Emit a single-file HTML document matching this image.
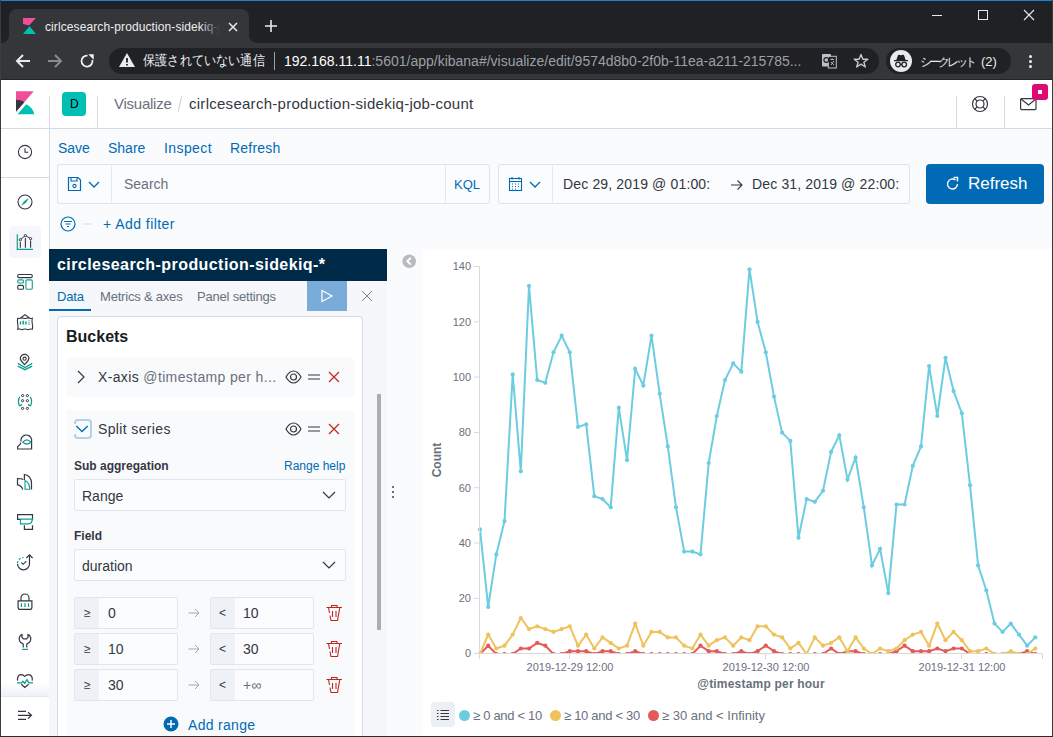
<!DOCTYPE html>
<html><head><meta charset="utf-8">
<style>
*{box-sizing:border-box;margin:0;padding:0}
html,body{width:1053px;height:737px;overflow:hidden;background:#fafbfd;font-family:"Liberation Sans",sans-serif}
.a{position:absolute}
.t{position:absolute;white-space:nowrap;line-height:1}
svg{position:absolute;overflow:visible}
</style></head><body>
<!-- CHROME -->
<div class="a" style="left:0;top:0;width:1053px;height:43px;background:#202124"></div>
<div class="a" style="left:0;top:0;width:1053px;height:1px;background:#1883d7"></div>
<div class="a" style="left:9px;top:9px;width:240px;height:34px;background:#35363a;border-radius:8px 8px 0 0"></div>
<div class="a" style="left:0;top:43px;width:1053px;height:36px;background:#35363a"></div>
<div class="a" style="left:1px;top:35px;width:8px;height:8px;background:radial-gradient(circle at 0 0,#202124 7.5px,#35363a 8.5px)"></div>
<div class="a" style="left:249px;top:35px;width:8px;height:8px;background:radial-gradient(circle at 100% 0,#202124 7.5px,#35363a 8.5px)"></div>
<!-- favicon -->
<svg style="left:23px;top:18px" width="13" height="16" viewBox="0 0 13 16"><path d="M0 0H13L6 7.5 0 6Z" fill="#f04e98"/><path d="M0 6.5 6 8 0 15Z" fill="#343741"/><path d="M6.6 8.3 13 16H0Z" fill="#00bfb3"/></svg>
<div class="t" style="left:45px;top:21px;font-size:12px;color:#eceef1;letter-spacing:0.1px">cirlcesearch-production-sidekiq-j</div>
<div class="a" style="left:200px;top:14px;width:22px;height:24px;background:linear-gradient(90deg,rgba(53,54,58,0),#35363a 90%)"></div>
<svg style="left:228px;top:22px" width="10" height="10"><path d="M1 1L9 9M9 1L1 9" stroke="#e8eaed" stroke-width="1.5"/></svg>
<svg style="left:265px;top:20px" width="12" height="12"><path d="M6 0V12M0 6H12" stroke="#e8eaed" stroke-width="1.6"/></svg>
<!-- window controls -->
<div class="a" style="left:932px;top:15px;width:10px;height:1px;background:#e8eaed"></div>
<div class="a" style="left:978px;top:10px;width:10px;height:10px;border:1px solid #e8eaed"></div>
<svg style="left:1024px;top:10px" width="10" height="10"><path d="M0 0L10 10M10 0L0 10" stroke="#e8eaed" stroke-width="1.1"/></svg>
<!-- nav buttons -->
<svg style="left:15px;top:53px" width="16" height="16"><path d="M15 8H2M8 2L2 8L8 14" stroke="#e8eaed" stroke-width="2" fill="none"/></svg>
<svg style="left:47px;top:53px" width="16" height="16"><path d="M1 8H14M8 2L14 8L8 14" stroke="#8a8b8e" stroke-width="2" fill="none"/></svg>
<svg style="left:79px;top:53px" width="16" height="16"><path d="M8.5 2.6A5.5 5.5 0 1 0 13.4 7" stroke="#f1f3f4" stroke-width="1.8" fill="none"/><path d="M9.3 1.3H14.7V6.7Z" fill="#f1f3f4"/></svg>
<!-- omnibox -->
<div class="a" style="left:109px;top:48px;width:770px;height:26px;background:#202124;border-radius:13px"></div>
<svg style="left:119px;top:53px" width="16" height="15"><path d="M8 0L16 14H0Z" fill="#e8eaed"/><path d="M8 5V9.5M8 11V12.5" stroke="#202124" stroke-width="1.8"/></svg>
<div class="t" style="left:143px;top:53px;font-size:14px;color:#e8eaed;transform:scaleX(0.87);transform-origin:0 0">保護されていない通信</div>
<div class="a" style="left:274px;top:52px;width:1px;height:18px;background:#9aa0a6"></div>
<div class="t" style="left:284px;top:54px;font-size:14px;color:#fff">192.168.11.11<span style="color:#9aa0a6">:5601/app/kibana#/visualize/edit/9574d8b0-2f0b-11ea-a211-215785...</span></div>
<svg style="left:820px;top:53px" width="18" height="16"><rect x="2" y="1" width="9" height="12.5" rx="1" fill="#bdc1c6"/><rect x="8.3" y="3.3" width="8" height="11.7" fill="#202124" stroke="#bdc1c6" stroke-width="1"/><circle cx="6.3" cy="7" r="2.4" fill="none" stroke="#202124" stroke-width="1.2"/><path d="M10.5 6.5H14M12 5.5V7M11 9L14 12M14 8L11 12" stroke="#bdc1c6" stroke-width="0.9"/></svg>
<svg style="left:853px;top:53px" width="16" height="16"><path d="M8 1.6L9.9 6.2H14.8L10.9 9.2L12.3 14L8 11.2L3.7 14L5.1 9.2L1.2 6.2H6.1Z" fill="none" stroke="#c4c6c9" stroke-width="1.4" stroke-linejoin="round"/></svg>
<!-- incognito -->
<div class="a" style="left:886px;top:48px;width:125px;height:26px;background:#202124;border-radius:13px"></div>
<div class="a" style="left:890px;top:50px;width:22px;height:22px;background:#e8eaed;border-radius:50%"></div>
<svg style="left:892px;top:53px" width="18" height="16"><path d="M4.3 7H13.7L12 2.2Q11.7 1.5 11 1.7L9 2.2L7 1.7Q6.3 1.5 6 2.2Z" fill="#202124"/><path d="M2 7.6H16" stroke="#202124" stroke-width="1.2"/><circle cx="6" cy="11.5" r="2.3" fill="none" stroke="#202124" stroke-width="1.3"/><circle cx="12.2" cy="11.5" r="2.3" fill="none" stroke="#202124" stroke-width="1.3"/><path d="M8.2 11.3H10" stroke="#202124" stroke-width="1.2"/></svg>
<div class="t" style="left:920px;top:55px;font-size:12px;color:#e8eaed"><span style="letter-spacing:-3px">シークレット</span><span style="margin-left:7px;font-size:13px">(2)</span></div>
<div class="a" style="left:1029px;top:55px;width:3px;height:3px;background:#f1f3f4;border-radius:50%"></div>
<div class="a" style="left:1029px;top:60px;width:3px;height:3px;background:#f1f3f4;border-radius:50%"></div>
<div class="a" style="left:1029px;top:65px;width:3px;height:3px;background:#f1f3f4;border-radius:50%"></div>

<!-- KIBANA HEADER -->
<div class="a" style="left:1px;top:79px;width:1051px;height:1px;background:#232427"></div>
<div class="a" style="left:1px;top:80px;width:1051px;height:49px;background:#fff;border-bottom:1px solid #d3dae6"></div>
<svg style="left:16px;top:91px" width="18.5" height="23.5" viewBox="4 0 26 32.1"><path fill="#F04E98" d="M4 0v28.789L28.935.017z"/><path fill="#343741" d="M4 12v16.789l11.906-13.738A24.721 24.721 0 004 12"/><path fill="#00BFB3" d="M18.479 18.023l-11.2 12.92-1.011 1.12h23.564c-1.258-5.8-5.004-10.72-11.353-14.04"/></svg>
<div class="a" style="left:49px;top:96px;width:1px;height:33px;background:#d3dae6"></div>
<div class="a" style="left:62px;top:92px;width:24px;height:24px;background:#00bfb3;border-radius:4px"></div>
<div class="t" style="left:70px;top:98px;font-size:12px;color:#000">D</div>
<div class="a" style="left:97px;top:96px;width:1px;height:33px;background:#d3dae6"></div>
<div class="t" style="left:114px;top:96px;font-size:15px;color:#69707d;letter-spacing:-0.25px">Visualize</div>
<svg style="left:176px;top:95px" width="8" height="18"><path d="M5.6 1.5L2.2 16.5" stroke="#c8ccd3" stroke-width="1"/></svg>
<div class="t" style="left:189px;top:96px;font-size:15px;color:#343741;letter-spacing:0.27px">cirlcesearch-production-sidekiq-job-count</div>
<div class="a" style="left:956px;top:96px;width:1px;height:33px;background:#d3dae6"></div>
<div class="a" style="left:1004px;top:96px;width:1px;height:33px;background:#d3dae6"></div>
<svg style="left:971px;top:95px" width="18" height="18"><circle cx="9" cy="9" r="7.5" fill="none" stroke="#343741" stroke-width="1.2"/><circle cx="9" cy="9" r="4" fill="none" stroke="#343741" stroke-width="1.2"/><path d="M3.5 3.5L6.2 6.2M14.5 3.5L11.8 6.2M3.5 14.5L6.2 11.8M14.5 14.5L11.8 11.8" stroke="#343741" stroke-width="1.2"/></svg>
<svg style="left:1020px;top:98px" width="17" height="13"><rect x="0.6" y="0.6" width="15.4" height="11" rx="1" fill="none" stroke="#343741" stroke-width="1.2"/><path d="M1 1L8.5 7L16 1" fill="none" stroke="#343741" stroke-width="1.2"/></svg>
<div class="a" style="left:1032px;top:84px;width:16px;height:16px;background:#dd0a73;border-radius:3px"></div>
<div class="a" style="left:1038px;top:90px;width:4px;height:4px;background:#fff"></div>

<!-- LEFT NAV -->
<div class="a" style="left:1px;top:129px;width:49px;height:608px;background:#fff;border-right:1px solid #d3dae6"></div>
<div class="a" style="left:1px;top:177px;width:48px;height:1px;background:#d3dae6"></div>
<div class="a" style="left:1px;top:683px;width:48px;height:13px;background:linear-gradient(rgba(245,247,250,0),rgba(235,239,245,.9))"></div>
<div class="a" style="left:1px;top:696px;width:48px;height:1px;background:#e3e8ef"></div>
<div class="a" style="left:9px;top:226px;width:32px;height:32px;background:#f5f7fa;border-radius:4px"></div>
<svg style="left:17px;top:144px" width="16" height="16" viewBox="0 0 16 16" fill="none" stroke-width="1.1"><circle cx="8" cy="8" r="6.6" stroke="#343741"/><path d="M8 4.3V8.3H11.2" stroke="#343741"/></svg>
<svg style="left:17px;top:194px" width="16" height="16" viewBox="0 0 16 16" fill="none" stroke-width="1.1"><circle cx="8" cy="8" r="7" stroke="#343741"/><path d="M11.3 4.7L8.7 8.7L4.7 11.3L7.3 7.3Z" fill="#0f9e91" stroke="#0f9e91" stroke-width="0.5"/></svg>
<svg style="left:17px;top:234px" width="16" height="16" viewBox="0 0 16 16" fill="none" stroke-width="1.1"><path d="M0.3 0.2V15.4H16" stroke="#0f9e91" stroke-width="1.2"/><path d="M3.3 5.8L8.4 1.4L13.6 4.7" stroke="#343741" stroke-width="1"/><circle cx="3.3" cy="5.8" r="1.1" stroke="#343741" fill="#f5f7fa" stroke-width="1"/><circle cx="8.4" cy="1.6" r="1.1" stroke="#343741" fill="#f5f7fa" stroke-width="1"/><circle cx="13.6" cy="4.7" r="1.1" stroke="#343741" fill="#f5f7fa" stroke-width="1"/><path d="M3.3 8V13.7M8.4 3.9V13.7M13.6 6.5V13.7" stroke="#343741" stroke-width="1.1"/></svg>
<svg style="left:17px;top:274px" width="16" height="16" viewBox="0 0 16 16" fill="none" stroke-width="1.1"><rect x="0.7" y="0.5" width="14.6" height="3.1" rx="1.3" stroke="#343741"/><rect x="0.7" y="5.9" width="5.8" height="3.1" rx="1.3" stroke="#0f9e91"/><rect x="0.7" y="11.4" width="5.8" height="3.9" rx="1.3" stroke="#343741"/><rect x="8.9" y="5.9" width="6.4" height="9.4" rx="1.3" stroke="#0f9e91"/></svg>
<svg style="left:17px;top:314px" width="16" height="16" viewBox="0 0 16 16" fill="none" stroke-width="1.1"><path d="M0.7 4.2Q2 4.8 3.5 4.2T6.5 4.2T9.5 4.2T12.5 4.2T15.3 4.2Q14.7 7 15.3 9.8T15.3 15.3Q14 14.7 12.5 15.3T9.5 15.3T6.5 15.3T3.5 15.3T0.7 15.3Q1.3 12.5 0.7 9.8T0.7 4.2Z" stroke="#343741"/><path d="M3.5 4L8 0.6L12.5 4" stroke="#343741"/><path d="M3.5 7.5V10.5M6.2 6.8V10.5M8.9 7.5V10.5" stroke="#0f9e91" stroke-width="1.5"/><path d="M11.5 6.8H12.5M11.5 8.6H12.5M11.5 10.4H12.5" stroke="#0f9e91" stroke-width="1.1"/></svg>
<svg style="left:17px;top:354px" width="16" height="16" viewBox="0 0 16 16" fill="none" stroke-width="1.1"><path d="M7.6 10.6C6.2 9 3.3 6.8 3.3 4.6A4.3 4.3 0 0 1 11.9 4.6C11.9 6.8 9 9 7.6 10.6Z" stroke="#343741" stroke-width="1.2"/><circle cx="7.6" cy="4.7" r="1.6" stroke="#343741"/><path d="M0.8 9.4L8 13.5L15.2 9.4M0.8 12.1L8 15.7L15.2 12.1" stroke="#0f9e91" stroke-width="1.3"/></svg>
<svg style="left:17px;top:394px" width="16" height="16" viewBox="0 0 16 16" fill="none" stroke-width="1.1"><g stroke="#343741" stroke-width="1"><circle cx="5.6" cy="1.6" r="1.1"/><circle cx="10.4" cy="1.6" r="1.1"/><circle cx="5.6" cy="6.7" r="1.1"/><circle cx="10.4" cy="6.7" r="1.1"/><circle cx="5.6" cy="14.4" r="1.1"/><circle cx="10.4" cy="14.4" r="1.1"/></g><path d="M2.8 2.8C1 5 1 9.5 2.6 12M2.6 12L5 10.4M13.2 2.8C15 5 15 9.5 13.4 12M13.4 12L11 10.4" stroke="#0f9e91" stroke-width="1.3"/></svg>
<svg style="left:17px;top:434px" width="16" height="16" viewBox="0 0 16 16" fill="none" stroke-width="1.1"><path d="M3.5 8.5V9.8L0.6 12.8V15H14.6V5.3A5.3 5.3 0 1 0 4 7.5" stroke="#343741" stroke-width="1.2"/><path d="M5.8 8.2Q9.8 3.6 13.8 8.2Q9.8 11.8 5.8 8.2Z" stroke="#0f9e91" stroke-width="1.2"/></svg>
<svg style="left:17px;top:474px" width="16" height="16" viewBox="0 0 16 16" fill="none" stroke-width="1.1"><path d="M6.3 5.6C5 4.7 3 4.5 0.5 4.5V10.8C3 11 5 13 5.8 15.6" stroke="#343741" stroke-width="1.2"/><path d="M7.4 6V0.5C11.5 0.8 14.5 4.5 14.5 9V15.6" stroke="#343741" stroke-width="1.2"/><path d="M8 6.6V15.2H12.8C12.8 11 10.8 8 8 6.6Z" stroke="#0f9e91" stroke-width="1.1"/></svg>
<svg style="left:17px;top:514px" width="16" height="16" viewBox="0 0 16 16" fill="none" stroke-width="1.1"><path d="M3.5 5.4H0.6V0.7H15.5V5.4" stroke="#343741" stroke-width="1.2"/><path d="M3.5 5.2H15.6C15 8 14 9.9 11.5 9.9H3.5Z" stroke="#0f9e91" stroke-width="1.2"/><path d="M7.4 11.2V15.3H15.5V11.2" stroke="#343741" stroke-width="1.2"/></svg>
<svg style="left:17px;top:554px" width="16" height="16" viewBox="0 0 16 16" fill="none" stroke-width="1.1"><path d="M12.5 1V9.8A6 6 0 0 1 0.5 9.8" stroke="#343741" stroke-width="1.2"/><path d="M9.4 4L12.5 0.8L15.6 4" stroke="#343741" stroke-width="1.2"/><path d="M0.5 9.3A6 6 0 0 1 6.6 3.6" stroke="#0f9e91" stroke-width="1.2" stroke-dasharray="2.2 1.6"/><path d="M4.4 8.5L6.2 10.3L9.3 7.1" stroke="#343741" stroke-width="1.1"/></svg>
<svg style="left:17px;top:594px" width="16" height="16" viewBox="0 0 16 16" fill="none" stroke-width="1.1"><path d="M4 6.9V4A4 4 0 0 1 12 4V6.9" stroke="#343741" stroke-width="1.2"/><path d="M1.1 6.9H14.9V13.8L14 15.3H2L1.1 13.8Z" stroke="#343741" stroke-width="1.2"/><path d="M4.4 9.3V12.9M11.5 9.3V12.9" stroke="#0f9e91" stroke-width="1.2"/><path d="M8 9.3V12.9" stroke="#0f9e91" stroke-width="1.8" stroke-opacity="0.7"/></svg>
<svg style="left:17px;top:634px" width="16" height="16" viewBox="0 0 16 16" fill="none" stroke-width="1.1"><path d="M6.2 13.4V10C3.8 9 2.2 7 2.2 4.8C2.2 2.8 3.3 1.3 5 0.5V3.5L6.5 4.9H9.5L11 3.5V0.5C12.7 1.3 13.8 2.8 13.8 4.8C13.8 7 12.2 9 9.8 10V13.4" stroke="#343741" stroke-width="1.2"/><path d="M5 15.4H11" stroke="#0f9e91" stroke-width="1.2"/></svg>
<svg style="left:17px;top:674px" width="16" height="16" viewBox="0 0 16 16" fill="none" stroke-width="1.1"><path d="M0.6 6.7C0.2 4 1 0.6 4 0.6C6 0.6 7 1.5 7.8 2.4C8.6 1.5 9.6 0.6 11.6 0.6C14.6 0.6 15.8 4 15.2 6.7M4.3 10.2L7.8 13.5L11.6 10.2" stroke="#343741" stroke-width="1.2"/><path d="M0 8.8H4.8L5.9 7.2L7.8 9.3L10 5.5L11.6 8.6L12.2 8.8H16" stroke="#0f9e91" stroke-width="1.3"/></svg>
<svg style="left:17px;top:708px" width="16" height="16" viewBox="0 0 16 16" fill="none" stroke-width="1.1"><path d="M1 3.4H9M1 7.3H14.5M1 11.3H9M11 4.2L14.5 7.3L11 10.6" stroke="#343741" stroke-width="1.2"/></svg>


<!-- MAIN -->
<div class="t" style="left:58px;top:141px;font-size:14px;color:#006bb4">Save</div>
<div class="t" style="left:108px;top:141px;font-size:14px;color:#006bb4">Share</div>
<div class="t" style="left:164px;top:141px;font-size:14px;color:#006bb4;letter-spacing:0.4px">Inspect</div>
<div class="t" style="left:230px;top:141px;font-size:14px;color:#006bb4;letter-spacing:0.2px">Refresh</div>

<!-- query bar -->
<div class="a" style="left:57px;top:164px;width:433px;height:40px;background:#fbfcfd;border:1px solid #dfe4ec;border-radius:2px"></div>
<div class="a" style="left:111px;top:165px;width:1px;height:38px;background:#e4e8ef"></div>
<div class="a" style="left:445px;top:165px;width:1px;height:38px;background:#e4e8ef"></div>
<svg style="left:67px;top:176px" width="34" height="16"><path d="M1.5 1.5H11L13.5 4V14.5H1.5Z" fill="none" stroke="#006bb4" stroke-width="1.2"/><path d="M4 1.5V5H10V1.5" fill="none" stroke="#006bb4" stroke-width="1.1"/><circle cx="7.5" cy="10" r="1.6" fill="none" stroke="#006bb4" stroke-width="1.1"/><path d="M22 6L27 11L32 6" fill="none" stroke="#006bb4" stroke-width="1.3"/></svg>
<div class="t" style="left:124px;top:177px;font-size:14px;color:#69707d">Search</div>
<div class="t" style="left:454px;top:178px;font-size:13px;color:#006bb4">KQL</div>
<!-- date -->
<div class="a" style="left:498px;top:164px;width:412px;height:40px;background:#fbfcfd;border:1px solid #dfe4ec;border-radius:2px"></div>
<div class="a" style="left:552px;top:165px;width:1px;height:38px;background:#e4e8ef"></div>
<svg style="left:508px;top:176px" width="36" height="16"><rect x="1.5" y="2.5" width="12" height="12" fill="none" stroke="#006bb4" stroke-width="1.1"/><path d="M1.5 5.5H13.5M4 1V3.5M11 1V3.5" stroke="#006bb4" stroke-width="1.1"/><path d="M4 8H5M7 8H8M10 8H11M4 10.5H5M7 10.5H8M10 10.5H11M4 13H5M7 13H8" stroke="#006bb4" stroke-width="1.2"/><path d="M22 6L27 11L32 6" fill="none" stroke="#006bb4" stroke-width="1.3"/></svg>
<div class="t" style="left:563px;top:177px;font-size:14px;color:#343741;letter-spacing:0.15px">Dec 29, 2019 @ 01:00:</div>
<svg style="left:731px;top:179px" width="12" height="12"><path d="M0 6H11M6.5 1.5L11 6L6.5 10.5" fill="none" stroke="#343741" stroke-width="1.1"/></svg>
<div class="t" style="left:752px;top:177px;font-size:14px;color:#343741;letter-spacing:0.15px">Dec 31, 2019 @ 22:00:</div>
<!-- refresh btn -->
<div class="a" style="left:926px;top:164px;width:118px;height:40px;background:#006bb4;border-radius:4px"></div>
<svg style="left:945px;top:176px" width="16" height="16"><path d="M12.5 8A5 5 0 1 1 10.5 4" fill="none" stroke="#fff" stroke-width="1.4"/><path d="M8.5 1.5H12.5V5.5" fill="none" stroke="#fff" stroke-width="1.4"/></svg>
<div class="t" style="left:968px;top:175px;font-size:17px;color:#fff">Refresh</div>
<!-- filter row -->
<svg style="left:60px;top:216px" width="40" height="16"><circle cx="8" cy="8" r="7" fill="none" stroke="#006bb4" stroke-width="1.2"/><path d="M4 5.5H12M5.5 8H10.5M7 10.5H9" stroke="#006bb4" stroke-width="1.2"/><path d="M23 8H32" stroke="#d3dae6" stroke-width="1"/></svg>
<div class="t" style="left:103px;top:217px;font-size:14px;color:#006bb4;letter-spacing:0.45px">+ Add filter</div>

<!-- SIDEBAR -->
<div class="a" style="left:49px;top:281px;width:338px;height:456px;background:#f5f7fa"></div>
<div class="a" style="left:49px;top:249px;width:338px;height:32px;background:#002b48"></div>
<div class="t" style="left:57px;top:257px;font-size:16px;font-weight:bold;color:#fff;letter-spacing:0.43px">circlesearch-production-sidekiq-*</div>
<div class="t" style="left:57px;top:290px;font-size:13px;color:#006bb4;letter-spacing:-0.2px">Data</div>
<div class="a" style="left:49px;top:309px;width:42px;height:2px;background:#006bb4"></div>
<div class="t" style="left:100px;top:290px;font-size:13px;color:#69707d;letter-spacing:-0.2px">Metrics &amp; axes</div>
<div class="t" style="left:197px;top:290px;font-size:13px;color:#69707d;letter-spacing:-0.2px">Panel settings</div>
<div class="a" style="left:307px;top:281px;width:40px;height:30px;background:#79acd9"></div>
<svg style="left:320px;top:289px" width="14" height="14"><path d="M2 1.5L12 7L2 12.5Z" fill="none" stroke="#fff" stroke-width="1.2"/></svg>
<svg style="left:361px;top:290px" width="12" height="12"><path d="M1 1L11 11M11 1L1 11" stroke="#7d828c" stroke-width="1"/></svg>
<!-- card -->
<div class="a" style="left:57px;top:316px;width:306px;height:430px;background:#fff;border:1px solid #d3dae6;border-radius:4px"></div>
<div class="t" style="left:66px;top:329px;font-size:16px;font-weight:bold;color:#1a1c21">Buckets</div>
<div class="a" style="left:66px;top:358px;width:288px;height:39px;background:#f9fafc;border-radius:4px"></div>
<svg style="left:76px;top:370px" width="10" height="14"><path d="M2 1L8 7L2 13" fill="none" stroke="#343741" stroke-width="1.2"/></svg>
<div class="t" style="left:98px;top:370px;font-size:14px;color:#343741;letter-spacing:0.36px">X-axis <span style="color:#69707d">@timestamp per h...</span></div>
<svg style="left:285px;top:369px" width="58" height="16"><path d="M1 8C3.5 3.5 6 2 8.5 2S13.5 3.5 16 8C13.5 12.5 11 14 8.5 14S3.5 12.5 1 8Z" fill="none" stroke="#343741" stroke-width="1.2"/><circle cx="8.5" cy="8" r="3" fill="none" stroke="#343741" stroke-width="1.2"/><path d="M23 6H35M23 10H35" stroke="#343741" stroke-width="1.2"/><path d="M44 3L54 13M54 3L44 13" stroke="#bd271e" stroke-width="1.2"/></svg>
<div class="a" style="left:66px;top:410px;width:288px;height:340px;background:#f9fafc;border-radius:4px"></div>
<div class="a" style="left:74px;top:419px;width:18px;height:20px;border:2px solid #b3d1ea;border-radius:4px"></div><div class="a" style="left:74px;top:424px;width:2px;height:10px;background:#f9fafc"></div>
<svg style="left:75px;top:424px" width="14" height="10"><path d="M1.3 2L7 7.5L12.7 2" fill="none" stroke="#006bb4" stroke-width="1.3"/></svg>
<div class="t" style="left:98px;top:422px;font-size:14px;color:#343741;letter-spacing:0.36px">Split series</div>
<svg style="left:285px;top:421px" width="58" height="16"><path d="M1 8C3.5 3.5 6 2 8.5 2S13.5 3.5 16 8C13.5 12.5 11 14 8.5 14S3.5 12.5 1 8Z" fill="none" stroke="#343741" stroke-width="1.2"/><circle cx="8.5" cy="8" r="3" fill="none" stroke="#343741" stroke-width="1.2"/><path d="M23 6H35M23 10H35" stroke="#343741" stroke-width="1.2"/><path d="M44 3L54 13M54 3L44 13" stroke="#bd271e" stroke-width="1.2"/></svg>
<div class="t" style="left:74px;top:460px;font-size:12px;font-weight:bold;color:#343741">Sub aggregation</div>
<div class="t" style="left:284px;top:460px;font-size:12px;color:#006bb4">Range help</div>
<div class="a" style="left:74px;top:479px;width:272px;height:32px;background:#fbfcfd;border:1px solid #e0e5ee;border-radius:2px"></div>
<div class="t" style="left:82px;top:489px;font-size:14px;color:#343741">Range</div>
<svg style="left:322px;top:490px" width="14" height="10"><path d="M1 2L7 8L13 2" fill="none" stroke="#343741" stroke-width="1.2"/></svg>
<div class="t" style="left:74px;top:530px;font-size:12px;font-weight:bold;color:#343741">Field</div>
<div class="a" style="left:74px;top:549px;width:272px;height:32px;background:#fbfcfd;border:1px solid #e0e5ee;border-radius:2px"></div>
<div class="t" style="left:82px;top:559px;font-size:14px;color:#343741">duration</div>
<svg style="left:322px;top:560px" width="14" height="10"><path d="M1 2L7 8L13 2" fill="none" stroke="#343741" stroke-width="1.2"/></svg>
<div class="a" style="left:74px;top:597px;width:104px;height:32px;background:#fbfcfd;border:1px solid #e0e5ee;border-radius:2px"></div>
<div class="a" style="left:75px;top:598px;width:24px;height:30px;background:#eef2f7"></div>
<div class="t" style="left:84px;top:607px;font-size:12px;color:#343741">≥</div>
<div class="t" style="left:108px;top:606px;font-size:14px;color:#343741">0</div>
<svg style="left:188px;top:607px" width="12" height="12"><path d="M0.5 6H11M7 2L11 6L7 10" fill="none" stroke="#a0a7b4" stroke-width="1"/></svg>
<div class="a" style="left:210px;top:597px;width:104px;height:32px;background:#fbfcfd;border:1px solid #e0e5ee;border-radius:2px"></div>
<div class="a" style="left:211px;top:598px;width:24px;height:30px;background:#eef2f7"></div>
<div class="t" style="left:219px;top:607px;font-size:12px;color:#343741">&lt;</div>
<div class="t" style="left:243px;top:606px;font-size:14px;color:#343741">10</div>
<svg style="left:326px;top:604px" width="17" height="18"><path d="M0.5 3.5H16M5.5 3.5V1.5H11V3.5M2.5 3.5L3.5 9M4 11.5L5 16.5H11.5L13.8 3.5M6.5 7V13M10 7V13" fill="none" stroke="#bd271e" stroke-width="1.1"/></svg>
<div class="a" style="left:74px;top:633px;width:104px;height:32px;background:#fbfcfd;border:1px solid #e0e5ee;border-radius:2px"></div>
<div class="a" style="left:75px;top:634px;width:24px;height:30px;background:#eef2f7"></div>
<div class="t" style="left:84px;top:643px;font-size:12px;color:#343741">≥</div>
<div class="t" style="left:108px;top:642px;font-size:14px;color:#343741">10</div>
<svg style="left:188px;top:643px" width="12" height="12"><path d="M0.5 6H11M7 2L11 6L7 10" fill="none" stroke="#a0a7b4" stroke-width="1"/></svg>
<div class="a" style="left:210px;top:633px;width:104px;height:32px;background:#fbfcfd;border:1px solid #e0e5ee;border-radius:2px"></div>
<div class="a" style="left:211px;top:634px;width:24px;height:30px;background:#eef2f7"></div>
<div class="t" style="left:219px;top:643px;font-size:12px;color:#343741">&lt;</div>
<div class="t" style="left:243px;top:642px;font-size:14px;color:#343741">30</div>
<svg style="left:326px;top:640px" width="17" height="18"><path d="M0.5 3.5H16M5.5 3.5V1.5H11V3.5M2.5 3.5L3.5 9M4 11.5L5 16.5H11.5L13.8 3.5M6.5 7V13M10 7V13" fill="none" stroke="#bd271e" stroke-width="1.1"/></svg>
<div class="a" style="left:74px;top:669px;width:104px;height:32px;background:#fbfcfd;border:1px solid #e0e5ee;border-radius:2px"></div>
<div class="a" style="left:75px;top:670px;width:24px;height:30px;background:#eef2f7"></div>
<div class="t" style="left:84px;top:679px;font-size:12px;color:#343741">≥</div>
<div class="t" style="left:108px;top:678px;font-size:14px;color:#343741">30</div>
<svg style="left:188px;top:679px" width="12" height="12"><path d="M0.5 6H11M7 2L11 6L7 10" fill="none" stroke="#a0a7b4" stroke-width="1"/></svg>
<div class="a" style="left:210px;top:669px;width:104px;height:32px;background:#fbfcfd;border:1px solid #e0e5ee;border-radius:2px"></div>
<div class="a" style="left:211px;top:670px;width:24px;height:30px;background:#eef2f7"></div>
<div class="t" style="left:219px;top:679px;font-size:12px;color:#343741">&lt;</div>
<div class="t" style="left:243px;top:678px;font-size:14px;color:#69707d">+∞</div>
<svg style="left:326px;top:676px" width="17" height="18"><path d="M0.5 3.5H16M5.5 3.5V1.5H11V3.5M2.5 3.5L3.5 9M4 11.5L5 16.5H11.5L13.8 3.5M6.5 7V13M10 7V13" fill="none" stroke="#bd271e" stroke-width="1.1"/></svg>

<svg style="left:163px;top:716px" width="16" height="16"><circle cx="8" cy="8" r="7.5" fill="#006bb4"/><path d="M8 4V12M4 8H12" stroke="#fff" stroke-width="1.5"/></svg>
<div class="t" style="left:188px;top:718px;font-size:14px;color:#006bb4;letter-spacing:0.3px">Add range</div>
<!-- scrollbar -->
<div class="a" style="left:377px;top:394px;width:4px;height:236px;background:#abadb1"></div>
<div class="a" style="left:392px;top:486px;width:2px;height:2px;background:#69707d"></div>
<div class="a" style="left:392px;top:491px;width:2px;height:2px;background:#69707d"></div>
<div class="a" style="left:392px;top:496px;width:2px;height:2px;background:#69707d"></div>
<svg style="left:402px;top:254px" width="14" height="14"><circle cx="7.2" cy="7.2" r="6.8" fill="#b9babd"/><path d="M8.8 3.8L5.3 7.2L8.8 10.6" fill="none" stroke="#fff" stroke-width="2"/></svg>

<!-- <svg style="left:0;top:0" width="1053" height="737">
<defs><clipPath id="cp"><rect x="476" y="250" width="570" height="403"/></clipPath></defs>
<g font-family="Liberation Sans" font-size="11" fill="#69707d" text-anchor="end">
<text x="471" y="270">140</text><text x="471" y="325.5">120</text><text x="471" y="381">100</text><text x="471" y="436">80</text><text x="471" y="491.5">60</text><text x="471" y="547">40</text><text x="471" y="602">20</text><text x="471" y="657">0</text></g>
<g font-family="Liberation Sans" font-size="11" fill="#69707d" text-anchor="middle"><text x="570" y="671">2019-12-29 12:00</text><text x="766" y="671">2019-12-30 12:00</text><text x="962" y="671">2019-12-31 12:00</text></g>
<text x="761" y="688" font-family="Liberation Sans" font-size="12" font-weight="bold" fill="#69707d" text-anchor="middle" letter-spacing="0.2">@timestamp per hour</text>
<text transform="translate(441,460) rotate(-90)" font-family="Liberation Sans" font-size="12" font-weight="bold" fill="#69707d" text-anchor="middle">Count</text>
<g clip-path="url(#cp)">
<polyline points="480.0,654.0 488.2,645.7 496.3,654.0 504.5,654.0 512.7,654.0 520.8,648.5 529.0,648.5 537.2,642.9 545.3,645.7 553.5,654.0 561.7,654.0 569.8,651.2 578.0,651.2 586.2,651.2 594.3,654.0 602.5,651.2 610.7,651.2 618.8,654.0 627.0,654.0 635.2,651.2 643.3,654.0 651.5,654.0 659.7,654.0 667.8,654.0 676.0,654.0 684.2,654.0 692.3,654.0 700.5,645.7 708.7,651.2 716.8,651.2 725.0,654.0 733.2,654.0 741.3,651.2 749.5,654.0 757.6,651.2 765.8,645.7 774.0,651.2 782.1,654.0 790.3,654.0 798.5,654.0 806.6,654.0 814.8,654.0 823.0,654.0 831.1,648.5 839.3,654.0 847.5,651.2 855.6,651.2 863.8,654.0 872.0,654.0 880.1,654.0 888.3,654.0 896.5,651.2 904.6,645.7 912.8,651.2 921.0,651.2 929.1,651.2 937.3,648.5 945.5,651.2 953.6,648.5 961.8,648.5 970.0,654.0 978.1,654.0 986.3,654.0 994.5,654.0 1002.6,654.0 1010.8,654.0 1019.0,654.0 1027.1,651.2 1035.3,654.0" fill="none" stroke="#e35a58" stroke-width="2"/><g fill="#e35a58"><circle cx="480.0" cy="654.0" r="2.1"/><circle cx="488.2" cy="645.7" r="2.1"/><circle cx="496.3" cy="654.0" r="2.1"/><circle cx="504.5" cy="654.0" r="2.1"/><circle cx="512.7" cy="654.0" r="2.1"/><circle cx="520.8" cy="648.5" r="2.1"/><circle cx="529.0" cy="648.5" r="2.1"/><circle cx="537.2" cy="642.9" r="2.1"/><circle cx="545.3" cy="645.7" r="2.1"/><circle cx="553.5" cy="654.0" r="2.1"/><circle cx="561.7" cy="654.0" r="2.1"/><circle cx="569.8" cy="651.2" r="2.1"/><circle cx="578.0" cy="651.2" r="2.1"/><circle cx="586.2" cy="651.2" r="2.1"/><circle cx="594.3" cy="654.0" r="2.1"/><circle cx="602.5" cy="651.2" r="2.1"/><circle cx="610.7" cy="651.2" r="2.1"/><circle cx="618.8" cy="654.0" r="2.1"/><circle cx="627.0" cy="654.0" r="2.1"/><circle cx="635.2" cy="651.2" r="2.1"/><circle cx="643.3" cy="654.0" r="2.1"/><circle cx="651.5" cy="654.0" r="2.1"/><circle cx="659.7" cy="654.0" r="2.1"/><circle cx="667.8" cy="654.0" r="2.1"/><circle cx="676.0" cy="654.0" r="2.1"/><circle cx="684.2" cy="654.0" r="2.1"/><circle cx="692.3" cy="654.0" r="2.1"/><circle cx="700.5" cy="645.7" r="2.1"/><circle cx="708.7" cy="651.2" r="2.1"/><circle cx="716.8" cy="651.2" r="2.1"/><circle cx="725.0" cy="654.0" r="2.1"/><circle cx="733.2" cy="654.0" r="2.1"/><circle cx="741.3" cy="651.2" r="2.1"/><circle cx="749.5" cy="654.0" r="2.1"/><circle cx="757.6" cy="651.2" r="2.1"/><circle cx="765.8" cy="645.7" r="2.1"/><circle cx="774.0" cy="651.2" r="2.1"/><circle cx="782.1" cy="654.0" r="2.1"/><circle cx="790.3" cy="654.0" r="2.1"/><circle cx="798.5" cy="654.0" r="2.1"/><circle cx="806.6" cy="654.0" r="2.1"/><circle cx="814.8" cy="654.0" r="2.1"/><circle cx="823.0" cy="654.0" r="2.1"/><circle cx="831.1" cy="648.5" r="2.1"/><circle cx="839.3" cy="654.0" r="2.1"/><circle cx="847.5" cy="651.2" r="2.1"/><circle cx="855.6" cy="651.2" r="2.1"/><circle cx="863.8" cy="654.0" r="2.1"/><circle cx="872.0" cy="654.0" r="2.1"/><circle cx="880.1" cy="654.0" r="2.1"/><circle cx="888.3" cy="654.0" r="2.1"/><circle cx="896.5" cy="651.2" r="2.1"/><circle cx="904.6" cy="645.7" r="2.1"/><circle cx="912.8" cy="651.2" r="2.1"/><circle cx="921.0" cy="651.2" r="2.1"/><circle cx="929.1" cy="651.2" r="2.1"/><circle cx="937.3" cy="648.5" r="2.1"/><circle cx="945.5" cy="651.2" r="2.1"/><circle cx="953.6" cy="648.5" r="2.1"/><circle cx="961.8" cy="648.5" r="2.1"/><circle cx="970.0" cy="654.0" r="2.1"/><circle cx="978.1" cy="654.0" r="2.1"/><circle cx="986.3" cy="654.0" r="2.1"/><circle cx="994.5" cy="654.0" r="2.1"/><circle cx="1002.6" cy="654.0" r="2.1"/><circle cx="1010.8" cy="654.0" r="2.1"/><circle cx="1019.0" cy="654.0" r="2.1"/><circle cx="1027.1" cy="651.2" r="2.1"/><circle cx="1035.3" cy="654.0" r="2.1"/></g>
<polyline points="480.0,654.0 488.2,634.6 496.3,648.5 504.5,645.7 512.7,634.6 520.8,618.0 529.0,629.1 537.2,626.3 545.3,629.1 553.5,631.9 561.7,629.1 569.8,626.3 578.0,645.7 586.2,634.6 594.3,648.5 602.5,637.4 610.7,642.9 618.8,648.5 627.0,645.7 635.2,623.6 643.3,645.7 651.5,631.9 659.7,631.9 667.8,637.4 676.0,637.4 684.2,645.7 692.3,648.5 700.5,634.6 708.7,645.7 716.8,640.2 725.0,637.4 733.2,645.7 741.3,637.4 749.5,640.2 757.6,626.3 765.8,626.3 774.0,634.6 782.1,637.4 790.3,648.5 798.5,642.9 806.6,654.0 814.8,637.4 823.0,645.7 831.1,642.9 839.3,637.4 847.5,651.2 855.6,637.4 863.8,648.5 872.0,654.0 880.1,648.5 888.3,651.2 896.5,648.5 904.6,640.2 912.8,634.6 921.0,631.9 929.1,645.7 937.3,623.6 945.5,640.2 953.6,631.9 961.8,640.2 970.0,651.2 978.1,651.2 986.3,648.5 994.5,654.0 1002.6,654.0 1010.8,651.2 1019.0,654.0 1027.1,654.0 1035.3,648.5" fill="none" stroke="#eec35e" stroke-width="2"/><g fill="#eec35e"><circle cx="480.0" cy="654.0" r="2.1"/><circle cx="488.2" cy="634.6" r="2.1"/><circle cx="496.3" cy="648.5" r="2.1"/><circle cx="504.5" cy="645.7" r="2.1"/><circle cx="512.7" cy="634.6" r="2.1"/><circle cx="520.8" cy="618.0" r="2.1"/><circle cx="529.0" cy="629.1" r="2.1"/><circle cx="537.2" cy="626.3" r="2.1"/><circle cx="545.3" cy="629.1" r="2.1"/><circle cx="553.5" cy="631.9" r="2.1"/><circle cx="561.7" cy="629.1" r="2.1"/><circle cx="569.8" cy="626.3" r="2.1"/><circle cx="578.0" cy="645.7" r="2.1"/><circle cx="586.2" cy="634.6" r="2.1"/><circle cx="594.3" cy="648.5" r="2.1"/><circle cx="602.5" cy="637.4" r="2.1"/><circle cx="610.7" cy="642.9" r="2.1"/><circle cx="618.8" cy="648.5" r="2.1"/><circle cx="627.0" cy="645.7" r="2.1"/><circle cx="635.2" cy="623.6" r="2.1"/><circle cx="643.3" cy="645.7" r="2.1"/><circle cx="651.5" cy="631.9" r="2.1"/><circle cx="659.7" cy="631.9" r="2.1"/><circle cx="667.8" cy="637.4" r="2.1"/><circle cx="676.0" cy="637.4" r="2.1"/><circle cx="684.2" cy="645.7" r="2.1"/><circle cx="692.3" cy="648.5" r="2.1"/><circle cx="700.5" cy="634.6" r="2.1"/><circle cx="708.7" cy="645.7" r="2.1"/><circle cx="716.8" cy="640.2" r="2.1"/><circle cx="725.0" cy="637.4" r="2.1"/><circle cx="733.2" cy="645.7" r="2.1"/><circle cx="741.3" cy="637.4" r="2.1"/><circle cx="749.5" cy="640.2" r="2.1"/><circle cx="757.6" cy="626.3" r="2.1"/><circle cx="765.8" cy="626.3" r="2.1"/><circle cx="774.0" cy="634.6" r="2.1"/><circle cx="782.1" cy="637.4" r="2.1"/><circle cx="790.3" cy="648.5" r="2.1"/><circle cx="798.5" cy="642.9" r="2.1"/><circle cx="806.6" cy="654.0" r="2.1"/><circle cx="814.8" cy="637.4" r="2.1"/><circle cx="823.0" cy="645.7" r="2.1"/><circle cx="831.1" cy="642.9" r="2.1"/><circle cx="839.3" cy="637.4" r="2.1"/><circle cx="847.5" cy="651.2" r="2.1"/><circle cx="855.6" cy="637.4" r="2.1"/><circle cx="863.8" cy="648.5" r="2.1"/><circle cx="872.0" cy="654.0" r="2.1"/><circle cx="880.1" cy="648.5" r="2.1"/><circle cx="888.3" cy="651.2" r="2.1"/><circle cx="896.5" cy="648.5" r="2.1"/><circle cx="904.6" cy="640.2" r="2.1"/><circle cx="912.8" cy="634.6" r="2.1"/><circle cx="921.0" cy="631.9" r="2.1"/><circle cx="929.1" cy="645.7" r="2.1"/><circle cx="937.3" cy="623.6" r="2.1"/><circle cx="945.5" cy="640.2" r="2.1"/><circle cx="953.6" cy="631.9" r="2.1"/><circle cx="961.8" cy="640.2" r="2.1"/><circle cx="970.0" cy="651.2" r="2.1"/><circle cx="978.1" cy="651.2" r="2.1"/><circle cx="986.3" cy="648.5" r="2.1"/><circle cx="994.5" cy="654.0" r="2.1"/><circle cx="1002.6" cy="654.0" r="2.1"/><circle cx="1010.8" cy="651.2" r="2.1"/><circle cx="1019.0" cy="654.0" r="2.1"/><circle cx="1027.1" cy="654.0" r="2.1"/><circle cx="1035.3" cy="648.5" r="2.1"/></g>
<polyline points="480.0,529.4 488.2,606.9 496.3,554.4 504.5,521.1 512.7,374.4 520.8,471.3 529.0,285.9 537.2,380.0 545.3,382.8 553.5,352.3 561.7,335.7 569.8,352.3 578.0,427.0 586.2,424.3 594.3,496.2 602.5,499.0 610.7,507.3 618.8,407.7 627.0,460.2 635.2,368.9 643.3,385.5 651.5,335.7 659.7,393.8 667.8,446.4 676.0,507.3 684.2,551.6 692.3,551.6 700.5,554.4 708.7,463.0 716.8,416.0 725.0,380.0 733.2,363.4 741.3,371.7 749.5,269.3 757.6,321.9 765.8,352.3 774.0,396.6 782.1,432.6 790.3,440.9 798.5,537.8 806.6,499.0 814.8,501.8 823.0,490.7 831.1,451.9 839.3,435.3 847.5,479.6 855.6,457.5 863.8,507.3 872.0,565.4 880.1,548.8 888.3,593.1 896.5,504.5 904.6,504.5 912.8,465.8 921.0,446.4 929.1,366.1 937.3,416.0 945.5,357.8 953.6,391.1 961.8,413.2 970.0,485.2 978.1,565.4 986.3,590.3 994.5,623.6 1002.6,631.9 1010.8,623.6 1019.0,634.6 1027.1,645.7 1035.3,637.4" fill="none" stroke="#6dcde0" stroke-width="2"/><g fill="#6dcde0"><circle cx="480.0" cy="529.4" r="2.1"/><circle cx="488.2" cy="606.9" r="2.1"/><circle cx="496.3" cy="554.4" r="2.1"/><circle cx="504.5" cy="521.1" r="2.1"/><circle cx="512.7" cy="374.4" r="2.1"/><circle cx="520.8" cy="471.3" r="2.1"/><circle cx="529.0" cy="285.9" r="2.1"/><circle cx="537.2" cy="380.0" r="2.1"/><circle cx="545.3" cy="382.8" r="2.1"/><circle cx="553.5" cy="352.3" r="2.1"/><circle cx="561.7" cy="335.7" r="2.1"/><circle cx="569.8" cy="352.3" r="2.1"/><circle cx="578.0" cy="427.0" r="2.1"/><circle cx="586.2" cy="424.3" r="2.1"/><circle cx="594.3" cy="496.2" r="2.1"/><circle cx="602.5" cy="499.0" r="2.1"/><circle cx="610.7" cy="507.3" r="2.1"/><circle cx="618.8" cy="407.7" r="2.1"/><circle cx="627.0" cy="460.2" r="2.1"/><circle cx="635.2" cy="368.9" r="2.1"/><circle cx="643.3" cy="385.5" r="2.1"/><circle cx="651.5" cy="335.7" r="2.1"/><circle cx="659.7" cy="393.8" r="2.1"/><circle cx="667.8" cy="446.4" r="2.1"/><circle cx="676.0" cy="507.3" r="2.1"/><circle cx="684.2" cy="551.6" r="2.1"/><circle cx="692.3" cy="551.6" r="2.1"/><circle cx="700.5" cy="554.4" r="2.1"/><circle cx="708.7" cy="463.0" r="2.1"/><circle cx="716.8" cy="416.0" r="2.1"/><circle cx="725.0" cy="380.0" r="2.1"/><circle cx="733.2" cy="363.4" r="2.1"/><circle cx="741.3" cy="371.7" r="2.1"/><circle cx="749.5" cy="269.3" r="2.1"/><circle cx="757.6" cy="321.9" r="2.1"/><circle cx="765.8" cy="352.3" r="2.1"/><circle cx="774.0" cy="396.6" r="2.1"/><circle cx="782.1" cy="432.6" r="2.1"/><circle cx="790.3" cy="440.9" r="2.1"/><circle cx="798.5" cy="537.8" r="2.1"/><circle cx="806.6" cy="499.0" r="2.1"/><circle cx="814.8" cy="501.8" r="2.1"/><circle cx="823.0" cy="490.7" r="2.1"/><circle cx="831.1" cy="451.9" r="2.1"/><circle cx="839.3" cy="435.3" r="2.1"/><circle cx="847.5" cy="479.6" r="2.1"/><circle cx="855.6" cy="457.5" r="2.1"/><circle cx="863.8" cy="507.3" r="2.1"/><circle cx="872.0" cy="565.4" r="2.1"/><circle cx="880.1" cy="548.8" r="2.1"/><circle cx="888.3" cy="593.1" r="2.1"/><circle cx="896.5" cy="504.5" r="2.1"/><circle cx="904.6" cy="504.5" r="2.1"/><circle cx="912.8" cy="465.8" r="2.1"/><circle cx="921.0" cy="446.4" r="2.1"/><circle cx="929.1" cy="366.1" r="2.1"/><circle cx="937.3" cy="416.0" r="2.1"/><circle cx="945.5" cy="357.8" r="2.1"/><circle cx="953.6" cy="391.1" r="2.1"/><circle cx="961.8" cy="413.2" r="2.1"/><circle cx="970.0" cy="485.2" r="2.1"/><circle cx="978.1" cy="565.4" r="2.1"/><circle cx="986.3" cy="590.3" r="2.1"/><circle cx="994.5" cy="623.6" r="2.1"/><circle cx="1002.6" cy="631.9" r="2.1"/><circle cx="1010.8" cy="623.6" r="2.1"/><circle cx="1019.0" cy="634.6" r="2.1"/><circle cx="1027.1" cy="645.7" r="2.1"/><circle cx="1035.3" cy="637.4" r="2.1"/></g>
</g>
<g stroke="#d9d9d9" stroke-width="1" fill="none"><path d="M479.5 266V653.5H1042.5V659M474 266.5H479.5M474 321.8H479.5M474 377.1H479.5M474 432.4H479.5M474 487.7H479.5M474 543H479.5M474 598.3H479.5M474 653.5H479.5M569.5 653.5V659M765.5 653.5V659M961.5 653.5V659M479.5 653.5V659"/></g>
</svg>
<div class="a" style="left:431px;top:702px;width:24px;height:25px;background:#eceff4;border-radius:4px"></div>
<svg style="left:436px;top:709px" width="14" height="12"><path d="M1 1.5H2.5M1 4.5H2.5M1 7.5H2.5M1 10.5H2.5M4.5 1.5H13M4.5 4.5H13M4.5 7.5H13M4.5 10.5H13" stroke="#343741" stroke-width="1.2"/></svg>
<div class="a" style="left:459px;top:710px;width:11px;height:11px;border-radius:50%;background:#6dcde0"></div>
<div class="t" style="left:473px;top:709px;font-size:13px;color:#69707d;letter-spacing:-0.3px">≥ 0 and &lt; 10</div>
<div class="a" style="left:550px;top:710px;width:11px;height:11px;border-radius:50%;background:#eec35e"></div>
<div class="t" style="left:564px;top:709px;font-size:13px;color:#69707d;letter-spacing:-0.3px">≥ 10 and &lt; 30</div>
<div class="a" style="left:648px;top:710px;width:11px;height:11px;border-radius:50%;background:#e35a58"></div>
<div class="t" style="left:662px;top:709px;font-size:13px;color:#69707d">≥ 30 and &lt; Infinity</div>
 PANEL -->
<div class="a" style="left:423px;top:249px;width:629px;height:488px;background:#fff"></div>
<svg style="left:0;top:0" width="1053" height="737">
<defs><clipPath id="cp"><rect x="476" y="250" width="570" height="403"/></clipPath></defs>
<g font-family="Liberation Sans" font-size="11" fill="#69707d" text-anchor="end">
<text x="471" y="270">140</text><text x="471" y="325.5">120</text><text x="471" y="381">100</text><text x="471" y="436">80</text><text x="471" y="491.5">60</text><text x="471" y="547">40</text><text x="471" y="602">20</text><text x="471" y="657">0</text></g>
<g font-family="Liberation Sans" font-size="11" fill="#69707d" text-anchor="middle"><text x="570" y="671">2019-12-29 12:00</text><text x="766" y="671">2019-12-30 12:00</text><text x="962" y="671">2019-12-31 12:00</text></g>
<text x="761" y="688" font-family="Liberation Sans" font-size="12" font-weight="bold" fill="#69707d" text-anchor="middle" letter-spacing="0.2">@timestamp per hour</text>
<text transform="translate(441,460) rotate(-90)" font-family="Liberation Sans" font-size="12" font-weight="bold" fill="#69707d" text-anchor="middle">Count</text>
<g clip-path="url(#cp)">
<polyline points="480.0,654.0 488.2,645.7 496.3,654.0 504.5,654.0 512.7,654.0 520.8,648.5 529.0,648.5 537.2,642.9 545.3,645.7 553.5,654.0 561.7,654.0 569.8,651.2 578.0,651.2 586.2,651.2 594.3,654.0 602.5,651.2 610.7,651.2 618.8,654.0 627.0,654.0 635.2,651.2 643.3,654.0 651.5,654.0 659.7,654.0 667.8,654.0 676.0,654.0 684.2,654.0 692.3,654.0 700.5,645.7 708.7,651.2 716.8,651.2 725.0,654.0 733.2,654.0 741.3,651.2 749.5,654.0 757.6,651.2 765.8,645.7 774.0,651.2 782.1,654.0 790.3,654.0 798.5,654.0 806.6,654.0 814.8,654.0 823.0,654.0 831.1,648.5 839.3,654.0 847.5,651.2 855.6,651.2 863.8,654.0 872.0,654.0 880.1,654.0 888.3,654.0 896.5,651.2 904.6,645.7 912.8,651.2 921.0,651.2 929.1,651.2 937.3,648.5 945.5,651.2 953.6,648.5 961.8,648.5 970.0,654.0 978.1,654.0 986.3,654.0 994.5,654.0 1002.6,654.0 1010.8,654.0 1019.0,654.0 1027.1,651.2 1035.3,654.0" fill="none" stroke="#e35a58" stroke-width="2"/><g fill="#e35a58"><circle cx="480.0" cy="654.0" r="2.1"/><circle cx="488.2" cy="645.7" r="2.1"/><circle cx="496.3" cy="654.0" r="2.1"/><circle cx="504.5" cy="654.0" r="2.1"/><circle cx="512.7" cy="654.0" r="2.1"/><circle cx="520.8" cy="648.5" r="2.1"/><circle cx="529.0" cy="648.5" r="2.1"/><circle cx="537.2" cy="642.9" r="2.1"/><circle cx="545.3" cy="645.7" r="2.1"/><circle cx="553.5" cy="654.0" r="2.1"/><circle cx="561.7" cy="654.0" r="2.1"/><circle cx="569.8" cy="651.2" r="2.1"/><circle cx="578.0" cy="651.2" r="2.1"/><circle cx="586.2" cy="651.2" r="2.1"/><circle cx="594.3" cy="654.0" r="2.1"/><circle cx="602.5" cy="651.2" r="2.1"/><circle cx="610.7" cy="651.2" r="2.1"/><circle cx="618.8" cy="654.0" r="2.1"/><circle cx="627.0" cy="654.0" r="2.1"/><circle cx="635.2" cy="651.2" r="2.1"/><circle cx="643.3" cy="654.0" r="2.1"/><circle cx="651.5" cy="654.0" r="2.1"/><circle cx="659.7" cy="654.0" r="2.1"/><circle cx="667.8" cy="654.0" r="2.1"/><circle cx="676.0" cy="654.0" r="2.1"/><circle cx="684.2" cy="654.0" r="2.1"/><circle cx="692.3" cy="654.0" r="2.1"/><circle cx="700.5" cy="645.7" r="2.1"/><circle cx="708.7" cy="651.2" r="2.1"/><circle cx="716.8" cy="651.2" r="2.1"/><circle cx="725.0" cy="654.0" r="2.1"/><circle cx="733.2" cy="654.0" r="2.1"/><circle cx="741.3" cy="651.2" r="2.1"/><circle cx="749.5" cy="654.0" r="2.1"/><circle cx="757.6" cy="651.2" r="2.1"/><circle cx="765.8" cy="645.7" r="2.1"/><circle cx="774.0" cy="651.2" r="2.1"/><circle cx="782.1" cy="654.0" r="2.1"/><circle cx="790.3" cy="654.0" r="2.1"/><circle cx="798.5" cy="654.0" r="2.1"/><circle cx="806.6" cy="654.0" r="2.1"/><circle cx="814.8" cy="654.0" r="2.1"/><circle cx="823.0" cy="654.0" r="2.1"/><circle cx="831.1" cy="648.5" r="2.1"/><circle cx="839.3" cy="654.0" r="2.1"/><circle cx="847.5" cy="651.2" r="2.1"/><circle cx="855.6" cy="651.2" r="2.1"/><circle cx="863.8" cy="654.0" r="2.1"/><circle cx="872.0" cy="654.0" r="2.1"/><circle cx="880.1" cy="654.0" r="2.1"/><circle cx="888.3" cy="654.0" r="2.1"/><circle cx="896.5" cy="651.2" r="2.1"/><circle cx="904.6" cy="645.7" r="2.1"/><circle cx="912.8" cy="651.2" r="2.1"/><circle cx="921.0" cy="651.2" r="2.1"/><circle cx="929.1" cy="651.2" r="2.1"/><circle cx="937.3" cy="648.5" r="2.1"/><circle cx="945.5" cy="651.2" r="2.1"/><circle cx="953.6" cy="648.5" r="2.1"/><circle cx="961.8" cy="648.5" r="2.1"/><circle cx="970.0" cy="654.0" r="2.1"/><circle cx="978.1" cy="654.0" r="2.1"/><circle cx="986.3" cy="654.0" r="2.1"/><circle cx="994.5" cy="654.0" r="2.1"/><circle cx="1002.6" cy="654.0" r="2.1"/><circle cx="1010.8" cy="654.0" r="2.1"/><circle cx="1019.0" cy="654.0" r="2.1"/><circle cx="1027.1" cy="651.2" r="2.1"/><circle cx="1035.3" cy="654.0" r="2.1"/></g>
<polyline points="480.0,654.0 488.2,634.6 496.3,648.5 504.5,645.7 512.7,634.6 520.8,618.0 529.0,629.1 537.2,626.3 545.3,629.1 553.5,631.9 561.7,629.1 569.8,626.3 578.0,645.7 586.2,634.6 594.3,648.5 602.5,637.4 610.7,642.9 618.8,648.5 627.0,645.7 635.2,623.6 643.3,645.7 651.5,631.9 659.7,631.9 667.8,637.4 676.0,637.4 684.2,645.7 692.3,648.5 700.5,634.6 708.7,645.7 716.8,640.2 725.0,637.4 733.2,645.7 741.3,637.4 749.5,640.2 757.6,626.3 765.8,626.3 774.0,634.6 782.1,637.4 790.3,648.5 798.5,642.9 806.6,654.0 814.8,637.4 823.0,645.7 831.1,642.9 839.3,637.4 847.5,651.2 855.6,637.4 863.8,648.5 872.0,654.0 880.1,648.5 888.3,651.2 896.5,648.5 904.6,640.2 912.8,634.6 921.0,631.9 929.1,645.7 937.3,623.6 945.5,640.2 953.6,631.9 961.8,640.2 970.0,651.2 978.1,651.2 986.3,648.5 994.5,654.0 1002.6,654.0 1010.8,651.2 1019.0,654.0 1027.1,654.0 1035.3,648.5" fill="none" stroke="#eec35e" stroke-width="2"/><g fill="#eec35e"><circle cx="480.0" cy="654.0" r="2.1"/><circle cx="488.2" cy="634.6" r="2.1"/><circle cx="496.3" cy="648.5" r="2.1"/><circle cx="504.5" cy="645.7" r="2.1"/><circle cx="512.7" cy="634.6" r="2.1"/><circle cx="520.8" cy="618.0" r="2.1"/><circle cx="529.0" cy="629.1" r="2.1"/><circle cx="537.2" cy="626.3" r="2.1"/><circle cx="545.3" cy="629.1" r="2.1"/><circle cx="553.5" cy="631.9" r="2.1"/><circle cx="561.7" cy="629.1" r="2.1"/><circle cx="569.8" cy="626.3" r="2.1"/><circle cx="578.0" cy="645.7" r="2.1"/><circle cx="586.2" cy="634.6" r="2.1"/><circle cx="594.3" cy="648.5" r="2.1"/><circle cx="602.5" cy="637.4" r="2.1"/><circle cx="610.7" cy="642.9" r="2.1"/><circle cx="618.8" cy="648.5" r="2.1"/><circle cx="627.0" cy="645.7" r="2.1"/><circle cx="635.2" cy="623.6" r="2.1"/><circle cx="643.3" cy="645.7" r="2.1"/><circle cx="651.5" cy="631.9" r="2.1"/><circle cx="659.7" cy="631.9" r="2.1"/><circle cx="667.8" cy="637.4" r="2.1"/><circle cx="676.0" cy="637.4" r="2.1"/><circle cx="684.2" cy="645.7" r="2.1"/><circle cx="692.3" cy="648.5" r="2.1"/><circle cx="700.5" cy="634.6" r="2.1"/><circle cx="708.7" cy="645.7" r="2.1"/><circle cx="716.8" cy="640.2" r="2.1"/><circle cx="725.0" cy="637.4" r="2.1"/><circle cx="733.2" cy="645.7" r="2.1"/><circle cx="741.3" cy="637.4" r="2.1"/><circle cx="749.5" cy="640.2" r="2.1"/><circle cx="757.6" cy="626.3" r="2.1"/><circle cx="765.8" cy="626.3" r="2.1"/><circle cx="774.0" cy="634.6" r="2.1"/><circle cx="782.1" cy="637.4" r="2.1"/><circle cx="790.3" cy="648.5" r="2.1"/><circle cx="798.5" cy="642.9" r="2.1"/><circle cx="806.6" cy="654.0" r="2.1"/><circle cx="814.8" cy="637.4" r="2.1"/><circle cx="823.0" cy="645.7" r="2.1"/><circle cx="831.1" cy="642.9" r="2.1"/><circle cx="839.3" cy="637.4" r="2.1"/><circle cx="847.5" cy="651.2" r="2.1"/><circle cx="855.6" cy="637.4" r="2.1"/><circle cx="863.8" cy="648.5" r="2.1"/><circle cx="872.0" cy="654.0" r="2.1"/><circle cx="880.1" cy="648.5" r="2.1"/><circle cx="888.3" cy="651.2" r="2.1"/><circle cx="896.5" cy="648.5" r="2.1"/><circle cx="904.6" cy="640.2" r="2.1"/><circle cx="912.8" cy="634.6" r="2.1"/><circle cx="921.0" cy="631.9" r="2.1"/><circle cx="929.1" cy="645.7" r="2.1"/><circle cx="937.3" cy="623.6" r="2.1"/><circle cx="945.5" cy="640.2" r="2.1"/><circle cx="953.6" cy="631.9" r="2.1"/><circle cx="961.8" cy="640.2" r="2.1"/><circle cx="970.0" cy="651.2" r="2.1"/><circle cx="978.1" cy="651.2" r="2.1"/><circle cx="986.3" cy="648.5" r="2.1"/><circle cx="994.5" cy="654.0" r="2.1"/><circle cx="1002.6" cy="654.0" r="2.1"/><circle cx="1010.8" cy="651.2" r="2.1"/><circle cx="1019.0" cy="654.0" r="2.1"/><circle cx="1027.1" cy="654.0" r="2.1"/><circle cx="1035.3" cy="648.5" r="2.1"/></g>
<polyline points="480.0,529.4 488.2,606.9 496.3,554.4 504.5,521.1 512.7,374.4 520.8,471.3 529.0,285.9 537.2,380.0 545.3,382.8 553.5,352.3 561.7,335.7 569.8,352.3 578.0,427.0 586.2,424.3 594.3,496.2 602.5,499.0 610.7,507.3 618.8,407.7 627.0,460.2 635.2,368.9 643.3,385.5 651.5,335.7 659.7,393.8 667.8,446.4 676.0,507.3 684.2,551.6 692.3,551.6 700.5,554.4 708.7,463.0 716.8,416.0 725.0,380.0 733.2,363.4 741.3,371.7 749.5,269.3 757.6,321.9 765.8,352.3 774.0,396.6 782.1,432.6 790.3,440.9 798.5,537.8 806.6,499.0 814.8,501.8 823.0,490.7 831.1,451.9 839.3,435.3 847.5,479.6 855.6,457.5 863.8,507.3 872.0,565.4 880.1,548.8 888.3,593.1 896.5,504.5 904.6,504.5 912.8,465.8 921.0,446.4 929.1,366.1 937.3,416.0 945.5,357.8 953.6,391.1 961.8,413.2 970.0,485.2 978.1,565.4 986.3,590.3 994.5,623.6 1002.6,631.9 1010.8,623.6 1019.0,634.6 1027.1,645.7 1035.3,637.4" fill="none" stroke="#6dcde0" stroke-width="2"/><g fill="#6dcde0"><circle cx="480.0" cy="529.4" r="2.1"/><circle cx="488.2" cy="606.9" r="2.1"/><circle cx="496.3" cy="554.4" r="2.1"/><circle cx="504.5" cy="521.1" r="2.1"/><circle cx="512.7" cy="374.4" r="2.1"/><circle cx="520.8" cy="471.3" r="2.1"/><circle cx="529.0" cy="285.9" r="2.1"/><circle cx="537.2" cy="380.0" r="2.1"/><circle cx="545.3" cy="382.8" r="2.1"/><circle cx="553.5" cy="352.3" r="2.1"/><circle cx="561.7" cy="335.7" r="2.1"/><circle cx="569.8" cy="352.3" r="2.1"/><circle cx="578.0" cy="427.0" r="2.1"/><circle cx="586.2" cy="424.3" r="2.1"/><circle cx="594.3" cy="496.2" r="2.1"/><circle cx="602.5" cy="499.0" r="2.1"/><circle cx="610.7" cy="507.3" r="2.1"/><circle cx="618.8" cy="407.7" r="2.1"/><circle cx="627.0" cy="460.2" r="2.1"/><circle cx="635.2" cy="368.9" r="2.1"/><circle cx="643.3" cy="385.5" r="2.1"/><circle cx="651.5" cy="335.7" r="2.1"/><circle cx="659.7" cy="393.8" r="2.1"/><circle cx="667.8" cy="446.4" r="2.1"/><circle cx="676.0" cy="507.3" r="2.1"/><circle cx="684.2" cy="551.6" r="2.1"/><circle cx="692.3" cy="551.6" r="2.1"/><circle cx="700.5" cy="554.4" r="2.1"/><circle cx="708.7" cy="463.0" r="2.1"/><circle cx="716.8" cy="416.0" r="2.1"/><circle cx="725.0" cy="380.0" r="2.1"/><circle cx="733.2" cy="363.4" r="2.1"/><circle cx="741.3" cy="371.7" r="2.1"/><circle cx="749.5" cy="269.3" r="2.1"/><circle cx="757.6" cy="321.9" r="2.1"/><circle cx="765.8" cy="352.3" r="2.1"/><circle cx="774.0" cy="396.6" r="2.1"/><circle cx="782.1" cy="432.6" r="2.1"/><circle cx="790.3" cy="440.9" r="2.1"/><circle cx="798.5" cy="537.8" r="2.1"/><circle cx="806.6" cy="499.0" r="2.1"/><circle cx="814.8" cy="501.8" r="2.1"/><circle cx="823.0" cy="490.7" r="2.1"/><circle cx="831.1" cy="451.9" r="2.1"/><circle cx="839.3" cy="435.3" r="2.1"/><circle cx="847.5" cy="479.6" r="2.1"/><circle cx="855.6" cy="457.5" r="2.1"/><circle cx="863.8" cy="507.3" r="2.1"/><circle cx="872.0" cy="565.4" r="2.1"/><circle cx="880.1" cy="548.8" r="2.1"/><circle cx="888.3" cy="593.1" r="2.1"/><circle cx="896.5" cy="504.5" r="2.1"/><circle cx="904.6" cy="504.5" r="2.1"/><circle cx="912.8" cy="465.8" r="2.1"/><circle cx="921.0" cy="446.4" r="2.1"/><circle cx="929.1" cy="366.1" r="2.1"/><circle cx="937.3" cy="416.0" r="2.1"/><circle cx="945.5" cy="357.8" r="2.1"/><circle cx="953.6" cy="391.1" r="2.1"/><circle cx="961.8" cy="413.2" r="2.1"/><circle cx="970.0" cy="485.2" r="2.1"/><circle cx="978.1" cy="565.4" r="2.1"/><circle cx="986.3" cy="590.3" r="2.1"/><circle cx="994.5" cy="623.6" r="2.1"/><circle cx="1002.6" cy="631.9" r="2.1"/><circle cx="1010.8" cy="623.6" r="2.1"/><circle cx="1019.0" cy="634.6" r="2.1"/><circle cx="1027.1" cy="645.7" r="2.1"/><circle cx="1035.3" cy="637.4" r="2.1"/></g>
</g>
<g stroke="#d9d9d9" stroke-width="1" fill="none"><path d="M479.5 266V653.5H1042.5V659M474 266.5H479.5M474 321.8H479.5M474 377.1H479.5M474 432.4H479.5M474 487.7H479.5M474 543H479.5M474 598.3H479.5M474 653.5H479.5M569.5 653.5V659M765.5 653.5V659M961.5 653.5V659M479.5 653.5V659"/></g>
</svg>
<div class="a" style="left:431px;top:702px;width:24px;height:25px;background:#eceff4;border-radius:4px"></div>
<svg style="left:436px;top:709px" width="14" height="12"><path d="M1 1.5H2.5M1 4.5H2.5M1 7.5H2.5M1 10.5H2.5M4.5 1.5H13M4.5 4.5H13M4.5 7.5H13M4.5 10.5H13" stroke="#343741" stroke-width="1.2"/></svg>
<div class="a" style="left:459px;top:710px;width:11px;height:11px;border-radius:50%;background:#6dcde0"></div>
<div class="t" style="left:473px;top:709px;font-size:13px;color:#69707d;letter-spacing:-0.3px">≥ 0 and &lt; 10</div>
<div class="a" style="left:550px;top:710px;width:11px;height:11px;border-radius:50%;background:#eec35e"></div>
<div class="t" style="left:564px;top:709px;font-size:13px;color:#69707d;letter-spacing:-0.3px">≥ 10 and &lt; 30</div>
<div class="a" style="left:648px;top:710px;width:11px;height:11px;border-radius:50%;background:#e35a58"></div>
<div class="t" style="left:662px;top:709px;font-size:13px;color:#69707d">≥ 30 and &lt; Infinity</div>


<!-- borders -->
<div class="a" style="left:0;top:0;width:1px;height:737px;background:#3c3c3c"></div>
<div class="a" style="left:1052px;top:0;width:1px;height:737px;background:#3c3c3c"></div>
<div class="a" style="left:0;top:736px;width:1053px;height:1px;background:#2a2a2a"></div>
</body></html>
